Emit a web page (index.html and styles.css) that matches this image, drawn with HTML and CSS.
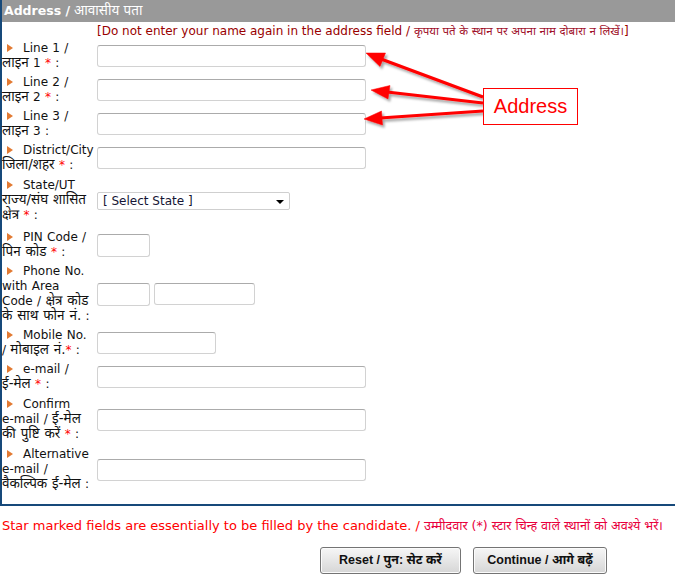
FILE: index.html
```html
<!DOCTYPE html>
<html>
<head>
<meta charset="utf-8">
<link rel="stylesheet" href="styles.css">
</head>
<body>
<div class="page">
  <div class="panel">
    <div class="panel-head"><b>Address /</b> <span class="head-hi">आवासीय पता</span></div>
    <div class="note">[Do not enter your name again in the address field / <span class="note-hi">कृपया पते के स्थान पर अपना नाम दोबारा न लिखें।</span>]</div>

    <div class="row">
      <div class="lbl"><span class="bullet"></span>Line 1 /<br><span class="hi">लाइन</span> 1 <span class="req">*</span> :</div>
      <div class="field"><input class="txt w-full" type="text"></div>
    </div>
    <div class="row">
      <div class="lbl"><span class="bullet"></span>Line 2 /<br><span class="hi">लाइन</span> 2 <span class="req">*</span> :</div>
      <div class="field"><input class="txt w-full" type="text"></div>
    </div>
    <div class="row">
      <div class="lbl"><span class="bullet"></span>Line 3 /<br><span class="hi">लाइन</span> 3 :</div>
      <div class="field"><input class="txt w-full" type="text"></div>
    </div>
    <div class="row">
      <div class="lbl"><span class="bullet"></span>District/City<br><span class="hi">जिला/शहर</span> <span class="req">*</span> :</div>
      <div class="field"><input class="txt w-full" type="text"></div>
    </div>
    <div class="row row-state">
      <div class="lbl"><span class="bullet"></span>State/UT<br><span class="hi">राज्य/संघ शासित</span><br><span class="hi">क्षेत्र</span> <span class="req">*</span> :</div>
      <div class="field"><div class="select"><span class="select-text">[ Select State ]</span><span class="caret"></span></div></div>
    </div>
    <div class="row">
      <div class="lbl"><span class="bullet"></span>PIN Code /<br><span class="hi">पिन कोड</span> <span class="req">*</span> :</div>
      <div class="field"><input class="txt w-pin" type="text"></div>
    </div>
    <div class="row row-phone">
      <div class="lbl"><span class="bullet"></span>Phone No.<br>with Area<br>Code / <span class="hi">क्षेत्र कोड</span><br><span class="hi">के साथ फोन नं.</span> :</div>
      <div class="field pair"><input class="txt w-pin" type="text"><input class="txt w-phone" type="text"></div>
    </div>
    <div class="row">
      <div class="lbl"><span class="bullet"></span>Mobile No.<br>/ <span class="hi">मोबाइल नं.</span><span class="req">*</span> :</div>
      <div class="field"><input class="txt w-mobile" type="text"></div>
    </div>
    <div class="row">
      <div class="lbl"><span class="bullet"></span>e-mail /<br><span class="hi">ई-मेल</span> <span class="req">*</span> :</div>
      <div class="field"><input class="txt w-full" type="text"></div>
    </div>
    <div class="row row-confirm">
      <div class="lbl"><span class="bullet"></span>Confirm<br>e-mail / <span class="hi">ई-मेल</span><br><span class="hi">की पुष्टि करें</span> <span class="req">*</span> :</div>
      <div class="field"><input class="txt w-full" type="text"></div>
    </div>
    <div class="row">
      <div class="lbl"><span class="bullet"></span>Alternative<br>e-mail /<br><span class="hi">वैकल्पिक ई-मेल</span> :</div>
      <div class="field"><input class="txt w-full" type="text"></div>
    </div>
  </div>

  <p class="star-note">Star marked fields are essentially to be filled by the candidate. / <span class="star-hi">उम्मीदवार (*) स्टार चिन्ह वाले स्थानों को अवश्ये भरें।</span></p>

  <div class="actions">
    <button class="btn btn-reset" type="button">Reset / पुन: सेट करें</button>
    <button class="btn btn-continue" type="button">Continue / आगे बढ़ें</button>
  </div>

  <svg class="arrows" width="675" height="580" viewBox="0 0 675 580">
    <defs>
      <filter id="sh" x="-10%" y="-50%" width="130%" height="200%">
        <feDropShadow dx="2" dy="2.5" stdDeviation="1.2" flood-color="#000" flood-opacity="0.35"/>
      </filter>
    </defs>
    <g filter="url(#sh)" fill="#ff0000" stroke="#ff0000">
      <line x1="483" y1="97" x2="381" y2="59" stroke-width="3"/>
      <polygon points="366,53 385.5,53 380,66.5" stroke-width="0.5"/>
      <line x1="483" y1="103" x2="387" y2="92" stroke-width="3"/>
      <polygon points="371,90 390,85.5 388,99" stroke-width="0.5"/>
      <line x1="483" y1="111" x2="380" y2="118" stroke-width="3"/>
      <polygon points="364,119 381.5,111 382.5,125" stroke-width="0.5"/>
    </g>
  </svg>
  <div class="callout">Address</div>
</div>
</body>
</html>
```

FILE: styles.css
```css
html, body {
  margin: 0;
  padding: 0;
  background: #fff;
}

body {
  font-family: "DejaVu Sans", Verdana, "Noto Sans Devanagari", "Lohit Devanagari", sans-serif;
  font-size: 12px;
  color: #111;
}

.page {
  position: relative;
  width: 675px;
  height: 580px;
  overflow: hidden;
}

.panel {
  border-left: 2px solid #16497a;
  border-bottom: 2px solid #16497a;
  padding-bottom: 10px;
  width: 700px;
}

.panel-head {
  background: #999999;
  color: #fff;
  height: 22px;
  line-height: 22px;
  padding-left: 2px;
  font-size: 12.5px;
}

.head-hi {
  font-size: 13.5px;
  line-height: 12px;
}

.note {
  padding-left: 95px;
  color: #990000;
  line-height: 15px;
  margin-top: 2px;
  white-space: nowrap;
}

.note-hi {
  color: #a0102a;
  font-size: 11.5px;
  line-height: 12px;
}

.row {
  display: grid;
  grid-template-columns: 95px auto;
  align-items: center;
  padding: 2px 0;
}

.row-state {
  padding: 3px 0 5px;
}

.row-confirm {
  padding: 3px 0;
}

.lbl {
  white-space: nowrap;
  color: #111;
  line-height: 15px;
  word-spacing: 0.5px;
}

.hi {
  font-size: 13.5px;
  line-height: 11px;
}

.bullet {
  display: inline-block;
  width: 0;
  height: 0;
  border-left: 6px solid #e27a32;
  border-top: 4.5px solid transparent;
  border-bottom: 4.5px solid transparent;
  margin: 0 10px 0 5px;
  vertical-align: 0;
}

.req {
  color: #ff0000;
}

.field {
  display: flex;
  align-items: center;
}

.pair {
  gap: 4px;
}

.txt {
  box-sizing: border-box;
  display: block;
  height: 22px;
  margin: 0;
  padding: 0 3px;
  border: 1px solid #d2d2d2;
  border-top-color: #ababab;
  border-radius: 3px;
  background: #fff;
  font: inherit;
}

.w-full { width: 269px; }
.w-pin { width: 53px; height: 23px; }
.w-phone { width: 101px; }
.w-mobile { width: 119px; }

.select {
  position: relative;
  box-sizing: border-box;
  width: 193px;
  height: 18px;
  border: 1px solid #cfcfcf;
  border-radius: 2px;
  background: #fff;
  font-size: 12px;
  line-height: 16px;
  padding-left: 5px;
  color: #151535;
}

.caret {
  position: absolute;
  right: 5px;
  top: 7px;
  width: 0;
  height: 0;
  border-top: 4px solid #000;
  border-left: 4px solid transparent;
  border-right: 4px solid transparent;
}

.star-note {
  margin: 12px 0 0 2px;
  line-height: 15px;
  color: #ff0000;
  white-space: nowrap;
  font-size: 13px;
}

.star-hi {
  color: #e8003c;
  font-size: 12.6px;
  line-height: 12px;
}

.actions {
  display: flex;
  gap: 12px;
  padding-left: 320px;
  margin-top: 14px;
}

.btn {
  box-sizing: border-box;
  height: 27px;
  margin: 0;
  padding: 0;
  border: 1px solid #747474;
  border-radius: 3px;
  background: linear-gradient(#f6f6f6, #e6e6e6 50%, #d6d6d6);
  box-shadow: inset 0 0 0 1px #fbfbfb;
  font-family: "Liberation Sans", Tahoma, "Noto Sans Devanagari", sans-serif;
  font-weight: bold;
  font-size: 12.5px;
  color: #111;
}

.btn-reset { width: 141px; }
.btn-continue { width: 134px; }

.arrows {
  position: absolute;
  left: 0;
  top: 0;
  pointer-events: none;
}

.callout {
  position: absolute;
  left: 483px;
  top: 88px;
  box-sizing: border-box;
  width: 95px;
  height: 37px;
  border: 1px solid #ff0000;
  background: #fff;
  color: #ff0000;
  font-family: "Liberation Sans", Arial, sans-serif;
  font-size: 20px;
  line-height: 35px;
  text-align: center;
}
```
